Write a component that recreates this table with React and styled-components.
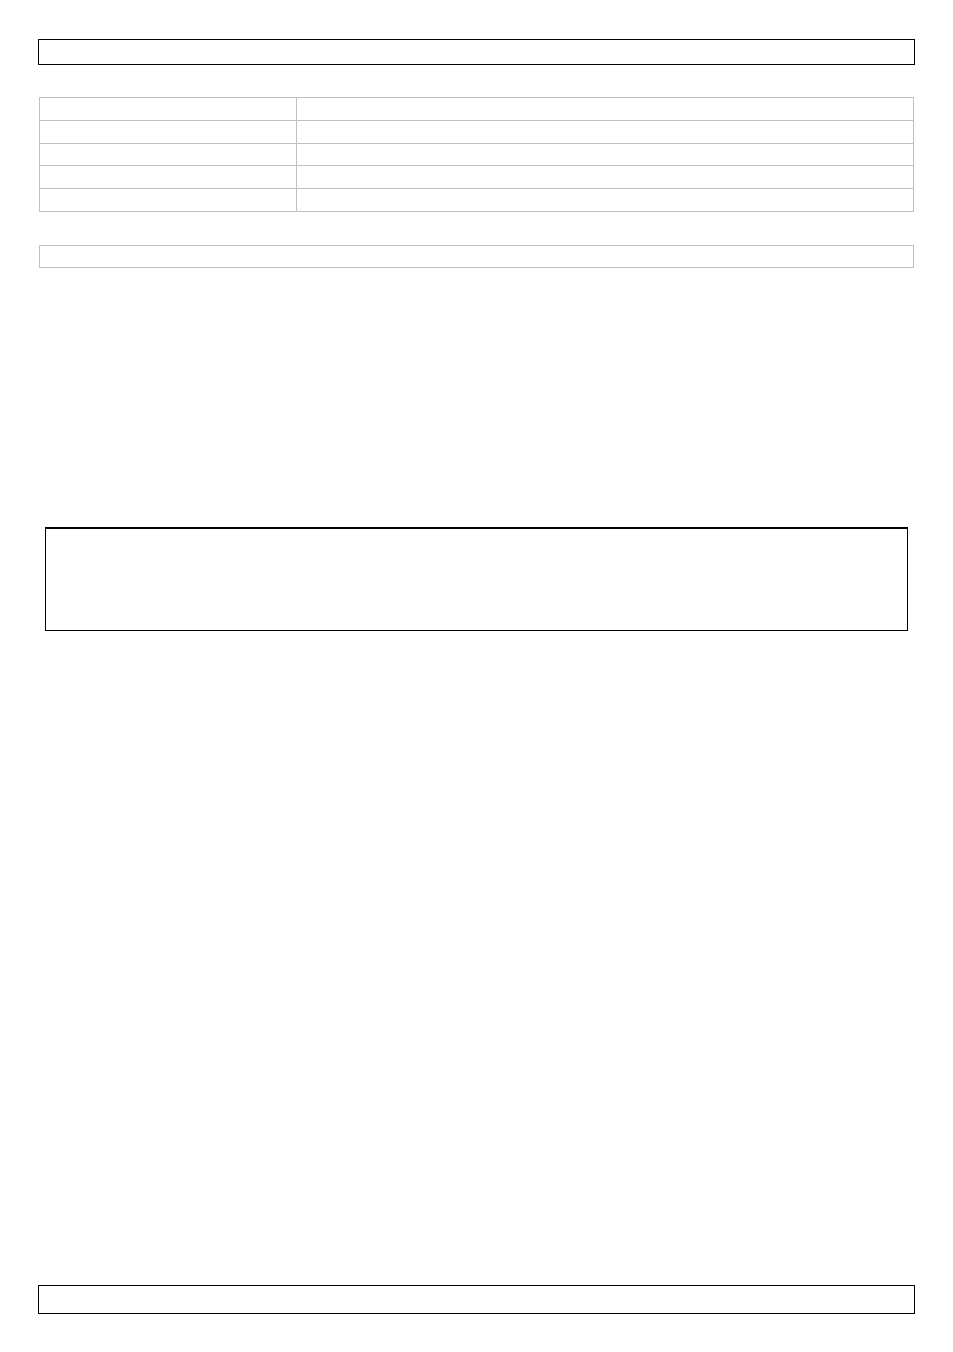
import React from 'react';
import styled, { createGlobalStyle } from 'styled-components';

const GlobalStyle = createGlobalStyle`
    html, body {
        margin: 0;
        padding: 0;
        background: #FFFFFF;
        font-family: "Liberation Sans", Arial, sans-serif;
    }
`;

// 문서 한 장
const Page = styled.div`
    width: 953px;
    height: 1352px;
    box-sizing: border-box;
    padding-left: 38px;
    display: flex;
    flex-direction: column;
`;

// 머리말 / 꼬리말 상자
const Frame = styled.div`
    width: 877px;
    height: ${props => props.height}px;
    margin-top: ${props => props.top}px;
    box-sizing: border-box;
    border: 1px solid #000000;
`;

// 회색 표
const SpecTable = styled.div`
    width: 875px;
    margin-top: 32px;
    margin-left: 1px;
    display: grid;
    grid-template-columns: 257px 1fr;
    border-top: 1px solid #C0C0C0;
    border-left: 1px solid #C0C0C0;
    box-sizing: border-box;
`;

const Cell = styled.div`
    height: ${props => props.height}px;
    border-right: 1px solid #C0C0C0;
    border-bottom: 1px solid #C0C0C0;
`;

// 회색 한 줄 상자
const NoteBar = styled.div`
    width: 875px;
    height: 23px;
    margin-top: 33px;
    margin-left: 1px;
    box-sizing: border-box;
    border: 1px solid #C0C0C0;
`;

// 경고 상자
const WarningBox = styled.div`
    width: 863px;
    height: 104px;
    margin-top: 259px;
    margin-left: 7px;
    box-sizing: border-box;
    border: 1px solid #000000;
    border-top-width: 2px;
`;

const rowHeights = [22, 22, 21, 22, 22];

const App = () => {
    return (
        <>
            <GlobalStyle />
            <Page>
                <Frame top={39} height={26} />
                <SpecTable>
                    {rowHeights.map((h, i) => (
                        <React.Fragment key={i}>
                            <Cell height={h} />
                            <Cell height={h} />
                        </React.Fragment>
                    ))}
                </SpecTable>
                <NoteBar />
                <WarningBox />
                <Frame top={654} height={29} />
            </Page>
        </>
    );
};

export default App;
